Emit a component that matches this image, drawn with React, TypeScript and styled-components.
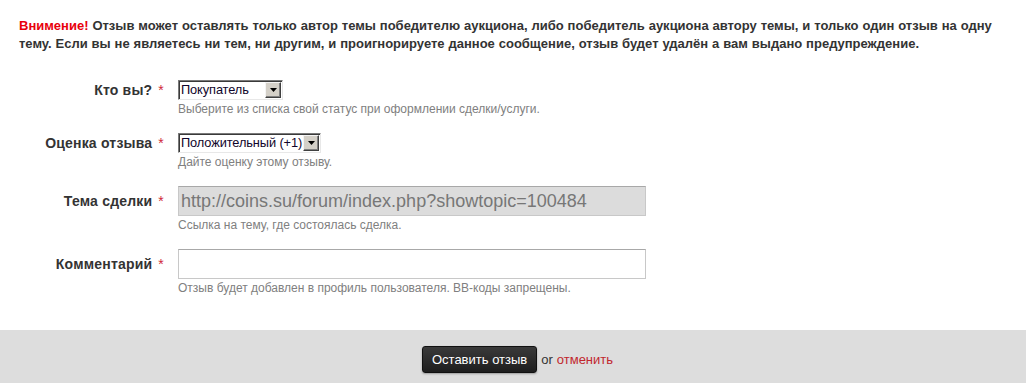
import React from "react";
import styled, { createGlobalStyle } from "styled-components";

const Global = createGlobalStyle`
  html, body { margin: 0; padding: 0; background: #fff; }
  body { font-family: "Liberation Sans", Arial, sans-serif; color: #333; }
`;

const Page = styled.div`
  width: 1026px;
  display: flex;
  flex-direction: column;
`;

const Warning = styled.p`
  margin: 0;
  padding: 17px 19px 0 19px;
  font-size: 13px;
  font-weight: bold;
  line-height: 18px;
  color: #333;
  word-spacing: 0.3px;
`;

const Alert = styled.span`
  color: #e8000b;
`;

const Form = styled.div`
  display: flex;
  flex-direction: column;
  gap: 16px;
  padding: 27px 0 34px 0;
`;

const Row = styled.div`
  display: grid;
  grid-template-columns: 164px 1fr;
  column-gap: 14px;
  align-items: start;
`;

const Label = styled.div<{ $h: number }>`
  height: ${(p) => p.$h}px;
  display: flex;
  align-items: center;
  justify-content: flex-end;
  font-size: 14px;
  font-weight: bold;
  letter-spacing: 0.2px;
  color: #333;
`;

const Req = styled.span`
  color: #d0283a;
  font-weight: normal;
  margin-left: 6px;
  font-size: 14px;
`;

const Field = styled.div`
  display: flex;
  flex-direction: column;
`;

const Select = styled.div<{ $w: number }>`
  width: ${(p) => p.$w}px;
  height: 20px;
  box-sizing: border-box;
  display: flex;
  align-items: center;
  border-top: 1px solid #7a7a7a;
  border-left: 1px solid #7a7a7a;
  border-right: 1px solid #e8e8e8;
  border-bottom: 1px solid #e8e8e8;
  box-shadow: inset 1px 1px 0 #3a3a3a;
  background: #fff;
  padding: 1px 1px 1px 2px;
`;

const SelectText = styled.span`
  flex: 1;
  font-size: 12.8px;
  letter-spacing: -0.1px;
  color: #10052a;
  white-space: nowrap;
  overflow: hidden;
  line-height: 16px;
`;

const ArrowBox = styled.span`
  width: 16px;
  height: 16px;
  flex: none;
  box-sizing: border-box;
  background: #d4d0c8;
  border-top: 1px solid #f4f4f4;
  border-left: 1px solid #f4f4f4;
  border-right: 1px solid #404040;
  border-bottom: 1px solid #404040;
  box-shadow: inset -1px -1px 0 #808080;
  display: flex;
  align-items: center;
  justify-content: center;
`;

const Input = styled.input`
  width: 468px;
  height: 30px;
  box-sizing: border-box;
  border: 1px solid #c8c8c8;
  border-top-color: #a8a8a8;
  padding: 0 2px;
  font-family: "Liberation Sans", Arial, sans-serif;
  font-size: 18px;
  color: #777;
  outline: none;
  &:disabled { background: #dcdcdc; color: #777; }
`;

const Hint = styled.div`
  margin-top: 2px;
  font-size: 12px;
  line-height: 15px;
  color: #808080;
`;

const Footer = styled.div`
  background: #dddddd;
  height: 60px;
  display: flex;
  justify-content: center;
  align-items: flex-start;
  padding-top: 16px;
  padding-left: 9px;
  box-sizing: border-box;
  font-size: 13px;
  gap: 4px;
`;

const Button = styled.button`
  height: 27px;
  padding: 0 9px;
  background: linear-gradient(#3a3a3a, #1e1e1e);
  border: 1px solid #111;
  border-radius: 3px;
  box-shadow: 0 1px 2px rgba(0, 0, 0, 0.3);
  color: #fff;
  font-family: "Liberation Sans", Arial, sans-serif;
  font-size: 13px;
  cursor: pointer;
`;

const Or = styled.span`
  line-height: 27px;
  color: #333;
  display: flex;
  gap: 4px;
`;

const Cancel = styled.a`
  color: #c1272d;
  text-decoration: none;
`;

const Arrow = () => (
  <ArrowBox>
    <svg width="7" height="4" viewBox="0 0 7 4">
      <polygon points="0,0 7,0 3.5,4" fill="#000" />
    </svg>
  </ArrowBox>
);

export default function App() {
  return (
    <Page>
      <Global />
      <Warning>
        <Alert>Внимение!</Alert> Отзыв может оставлять только автор темы победителю аукциона, либо победитель аукциона автору темы, и только один отзыв на одну тему. Если вы не являетесь ни тем, ни другим, и проигнорируете данное сообщение, отзыв будет удалён а вам выдано предупреждение.
      </Warning>
      <Form>
        <Row>
          <Label $h={20}>
            Кто вы?<Req>*</Req>
          </Label>
          <Field>
            <Select $w={105}>
              <SelectText>Покупатель</SelectText>
              <Arrow />
            </Select>
            <Hint>Выберите из списка свой статус при оформлении сделки/услуги.</Hint>
          </Field>
        </Row>
        <Row>
          <Label $h={20}>
            Оценка отзыва<Req>*</Req>
          </Label>
          <Field>
            <Select $w={143}>
              <SelectText>Положительный (+1)</SelectText>
              <Arrow />
            </Select>
            <Hint>Дайте оценку этому отзыву.</Hint>
          </Field>
        </Row>
        <Row>
          <Label $h={30}>
            Тема сделки<Req>*</Req>
          </Label>
          <Field>
            <Input disabled value="http://coins.su/forum/index.php?showtopic=100484" readOnly />
            <Hint>Ссылка на тему, где состоялась сделка.</Hint>
          </Field>
        </Row>
        <Row>
          <Label $h={30}>
            Комментарий<Req>*</Req>
          </Label>
          <Field>
            <Input defaultValue="" />
            <Hint>Отзыв будет добавлен в профиль пользователя. BB-коды запрещены.</Hint>
          </Field>
        </Row>
      </Form>
      <Footer>
        <Button>Оставить отзыв</Button>
        <Or>
          or <Cancel href="#">отменить</Cancel>
        </Or>
      </Footer>
    </Page>
  );
}
